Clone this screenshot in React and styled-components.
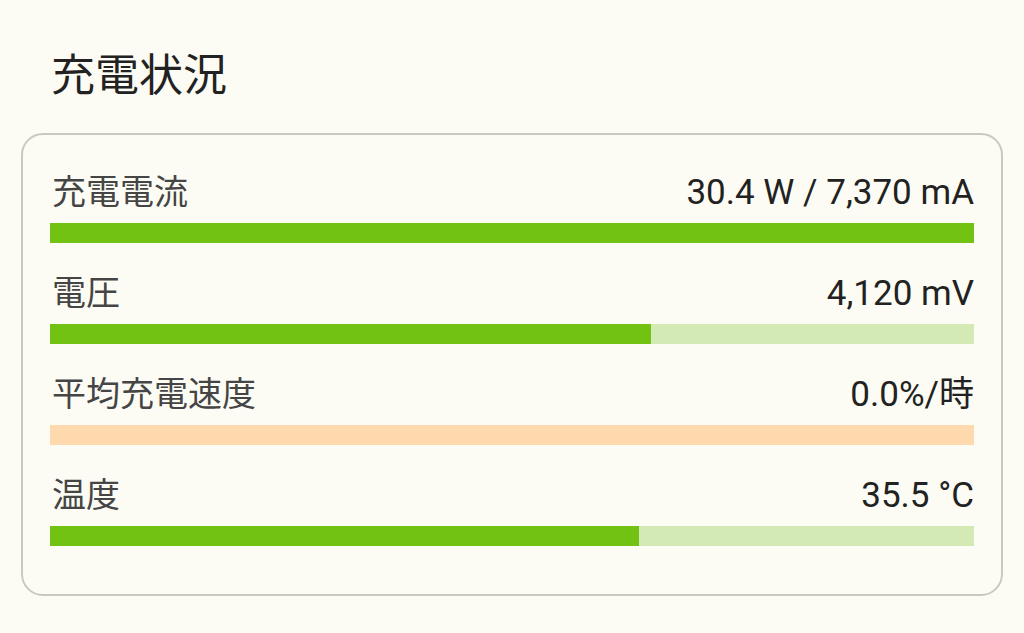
import React from 'react';
import styled, { createGlobalStyle } from 'styled-components';

const GlobalStyle = createGlobalStyle`
  html, body {
    margin: 0;
    padding: 0;
    background: #fcfcf4;
  }
  body {
    font-family: "Noto Sans CJK JP", "Noto Sans", sans-serif;
  }
`;

const Page = styled.div`
  width: 1024px;
  height: 633px;
  box-sizing: border-box;
  padding: 42px 21px 0 21px;
  background: #fcfcf4;
  overflow: hidden;
`;

const Title = styled.h1`
  margin: 0 0 31px 0;
  padding-left: 30px;
  font-size: 44px;
  line-height: 60px;
  font-weight: 400;
  color: #222;
`;

const Card = styled.section`
  border: 2px solid #c8c9c1;
  border-radius: 22px;
  padding: 31px 27px 48px 27px;
  display: flex;
  flex-direction: column;
  gap: 24px;
`;

const Row = styled.div`
  display: flex;
  flex-direction: column;
  gap: 9px;
`;

const Header = styled.div`
  display: flex;
  justify-content: space-between;
  align-items: baseline;
  height: 48px;
  line-height: 48px;
`;

const Label = styled.span`
  font-size: 34px;
  color: #454545;
  padding-left: 2px;
`;

const Value = styled.span`
  font-family: Roboto, "Noto Sans CJK JP", sans-serif;
  font-size: 35px;
  color: #222;
`;

const Track = styled.div`
  height: 20px;
  background: ${(p) => p.$track};
  display: flex;
`;

const Fill = styled.div`
  height: 100%;
  background: #72c214;
`;

const rows = [
  { label: '充電電流', value: '30.4 W / 7,370 mA', pct: 100, track: '#d3eab5' },
  { label: '電圧', value: '4,120 mV', pct: 65, track: '#d3eab5' },
  { label: '平均充電速度', value: '0.0%/時', pct: 0, track: '#fdd9ad' },
  { label: '温度', value: '35.5 °C', pct: 63.7, track: '#d3eab5' },
];

export default function App() {
  return (
    <Page>
      <GlobalStyle />
      <Title>充電状況</Title>
      <Card>
        {rows.map((r) => (
          <Row key={r.label}>
            <Header>
              <Label>{r.label}</Label>
              <Value>{r.value}</Value>
            </Header>
            <Track $track={r.track}>
              <Fill style={{ width: `${r.pct}%` }} />
            </Track>
          </Row>
        ))}
      </Card>
    </Page>
  );
}
